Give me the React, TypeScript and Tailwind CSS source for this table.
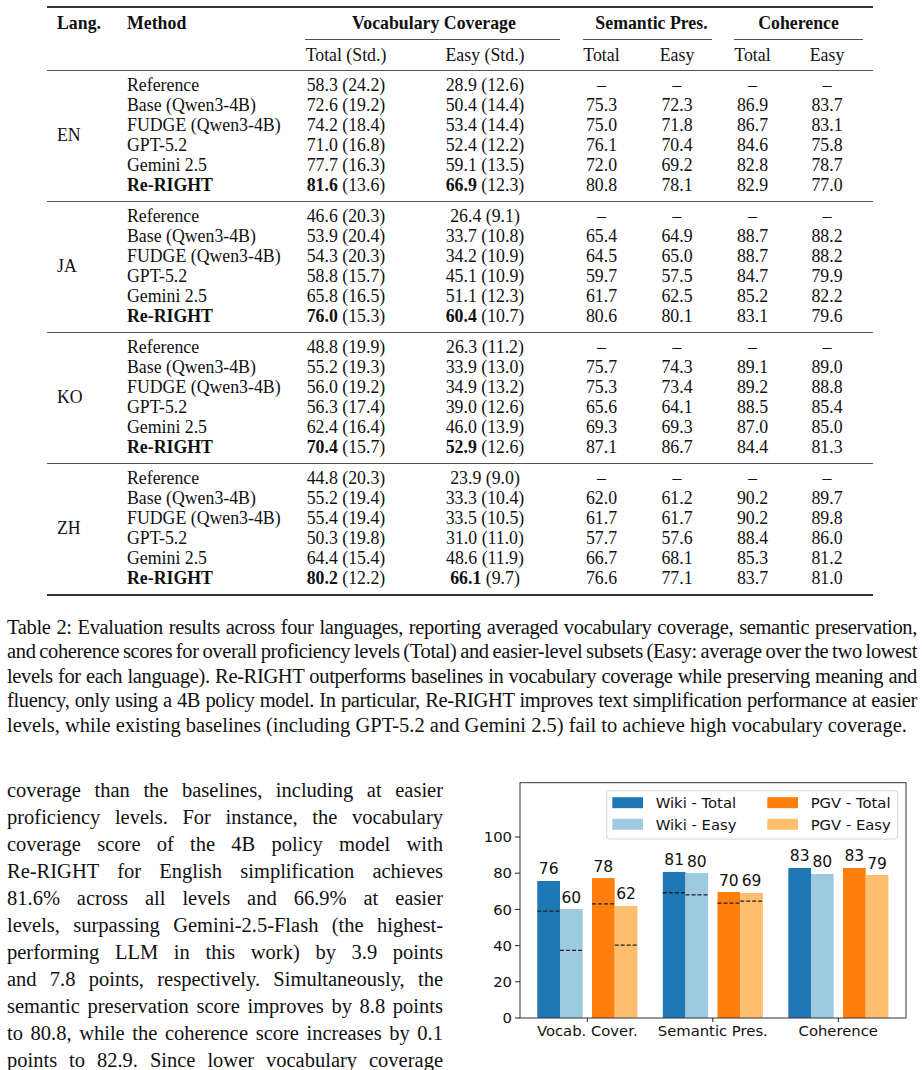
type Row = { method: string; total: [string, string]; easy: [string, string]; sem: [string, string]; coh: [string, string] };

const dash: [string, string] = ['–', '–'];

const groups: { lang: string; rows: Row[] }[] = [
  {
    lang: 'EN',
    rows: [
      { method: 'Reference', total: ['58.3', '(24.2)'], easy: ['28.9', '(12.6)'], sem: dash, coh: dash },
      { method: 'Base (Qwen3-4B)', total: ['72.6', '(19.2)'], easy: ['50.4', '(14.4)'], sem: ['75.3', '72.3'], coh: ['86.9', '83.7'] },
      { method: 'FUDGE (Qwen3-4B)', total: ['74.2', '(18.4)'], easy: ['53.4', '(14.4)'], sem: ['75.0', '71.8'], coh: ['86.7', '83.1'] },
      { method: 'GPT-5.2', total: ['71.0', '(16.8)'], easy: ['52.4', '(12.2)'], sem: ['76.1', '70.4'], coh: ['84.6', '75.8'] },
      { method: 'Gemini 2.5', total: ['77.7', '(16.3)'], easy: ['59.1', '(13.5)'], sem: ['72.0', '69.2'], coh: ['82.8', '78.7'] },
      { method: 'Re-RIGHT', total: ['81.6', '(13.6)'], easy: ['66.9', '(12.3)'], sem: ['80.8', '78.1'], coh: ['82.9', '77.0'] },
    ],
  },
  {
    lang: 'JA',
    rows: [
      { method: 'Reference', total: ['46.6', '(20.3)'], easy: ['26.4', '(9.1)'], sem: dash, coh: dash },
      { method: 'Base (Qwen3-4B)', total: ['53.9', '(20.4)'], easy: ['33.7', '(10.8)'], sem: ['65.4', '64.9'], coh: ['88.7', '88.2'] },
      { method: 'FUDGE (Qwen3-4B)', total: ['54.3', '(20.3)'], easy: ['34.2', '(10.9)'], sem: ['64.5', '65.0'], coh: ['88.7', '88.2'] },
      { method: 'GPT-5.2', total: ['58.8', '(15.7)'], easy: ['45.1', '(10.9)'], sem: ['59.7', '57.5'], coh: ['84.7', '79.9'] },
      { method: 'Gemini 2.5', total: ['65.8', '(16.5)'], easy: ['51.1', '(12.3)'], sem: ['61.7', '62.5'], coh: ['85.2', '82.2'] },
      { method: 'Re-RIGHT', total: ['76.0', '(15.3)'], easy: ['60.4', '(10.7)'], sem: ['80.6', '80.1'], coh: ['83.1', '79.6'] },
    ],
  },
  {
    lang: 'KO',
    rows: [
      { method: 'Reference', total: ['48.8', '(19.9)'], easy: ['26.3', '(11.2)'], sem: dash, coh: dash },
      { method: 'Base (Qwen3-4B)', total: ['55.2', '(19.3)'], easy: ['33.9', '(13.0)'], sem: ['75.7', '74.3'], coh: ['89.1', '89.0'] },
      { method: 'FUDGE (Qwen3-4B)', total: ['56.0', '(19.2)'], easy: ['34.9', '(13.2)'], sem: ['75.3', '73.4'], coh: ['89.2', '88.8'] },
      { method: 'GPT-5.2', total: ['56.3', '(17.4)'], easy: ['39.0', '(12.6)'], sem: ['65.6', '64.1'], coh: ['88.5', '85.4'] },
      { method: 'Gemini 2.5', total: ['62.4', '(16.4)'], easy: ['46.0', '(13.9)'], sem: ['69.3', '69.3'], coh: ['87.0', '85.0'] },
      { method: 'Re-RIGHT', total: ['70.4', '(15.7)'], easy: ['52.9', '(12.6)'], sem: ['87.1', '86.7'], coh: ['84.4', '81.3'] },
    ],
  },
  {
    lang: 'ZH',
    rows: [
      { method: 'Reference', total: ['44.8', '(20.3)'], easy: ['23.9', '(9.0)'], sem: dash, coh: dash },
      { method: 'Base (Qwen3-4B)', total: ['55.2', '(19.4)'], easy: ['33.3', '(10.4)'], sem: ['62.0', '61.2'], coh: ['90.2', '89.7'] },
      { method: 'FUDGE (Qwen3-4B)', total: ['55.4', '(19.4)'], easy: ['33.5', '(10.5)'], sem: ['61.7', '61.7'], coh: ['90.2', '89.8'] },
      { method: 'GPT-5.2', total: ['50.3', '(19.8)'], easy: ['31.0', '(11.0)'], sem: ['57.7', '57.6'], coh: ['88.4', '86.0'] },
      { method: 'Gemini 2.5', total: ['64.4', '(15.4)'], easy: ['48.6', '(11.9)'], sem: ['66.7', '68.1'], coh: ['85.3', '81.2'] },
      { method: 'Re-RIGHT', total: ['80.2', '(12.2)'], easy: ['66.1', '(9.7)'], sem: ['76.6', '77.1'], coh: ['83.7', '81.0'] },
    ],
  },
];

const caption = [
  'Table 2: Evaluation results across four languages, reporting averaged vocabulary coverage, semantic preservation,',
  'and coherence scores for overall proficiency levels (Total) and easier-level subsets (Easy: average over the two lowest',
  'levels for each language). Re-RIGHT outperforms baselines in vocabulary coverage while preserving meaning and',
  'fluency, only using a 4B policy model. In particular, Re-RIGHT improves text simplification performance at easier',
];

const body = [
  'coverage than the baselines, including at easier',
  'proficiency levels.  For instance, the vocabulary',
  'coverage score of the 4B policy model with',
  'Re-RIGHT for English simplification achieves',
  '81.6% across all levels and 66.9% at easier',
  'levels, surpassing Gemini-2.5-Flash (the highest-',
  'performing LLM in this work) by 3.9 points',
  'and 7.8 points, respectively.  Simultaneously, the',
  'semantic preservation score improves by 8.8 points',
  'to 80.8, while the coherence score increases by 0.1',
  'points to 82.9.  Since lower vocabulary coverage',
];

function TableRow({ row }: { row: Row }) {
  const best = row.method === 'Re-RIGHT';
  return (
    <div className="flex h-[20px] items-center leading-[20px]">
      <div className={`w-[178px] pl-[10px] ${best ? 'font-bold' : ''}`}>{row.method}</div>
      <div className="w-[102px] text-center">
        <span className={best ? 'font-bold' : ''}>{row.total[0]}</span> {row.total[1]}
      </div>
      <div className="w-[176px] text-center">
        <span className={best ? 'font-bold' : ''}>{row.easy[0]}</span> {row.easy[1]}
      </div>
      <div className="w-[57px] text-center">{row.sem[0]}</div>
      <div className="w-[94px] text-center">{row.sem[1]}</div>
      <div className="w-[57px] text-center">{row.coh[0]}</div>
      <div className="w-[92px] text-center">{row.coh[1]}</div>
    </div>
  );
}

function ResultsTable() {
  return (
    <div className="ml-[47px] w-[826px] pt-[6px] text-[17.8px] text-[#111]">
      <div className="h-[2px] bg-[#333]" />
      <div className="flex h-[31px] items-center font-bold">
        <div className="w-[70px] pl-[10px]">Lang.</div>
        <div className="w-[178px] pl-[10px]">Method</div>
        <div className="w-[278px] text-center">Vocabulary Coverage</div>
        <div className="w-[151px] pl-[6px] text-center">Semantic Pres.</div>
        <div className="w-[149px] text-center">Coherence</div>
      </div>
      <div className="flex h-px">
        <div className="w-[248px]" />
        <div className="w-[278px] pl-[10px] pr-[13px]"><div className="h-px bg-[#555]" /></div>
        <div className="w-[151px] pl-[10px] pr-[12px]"><div className="h-px bg-[#555]" /></div>
        <div className="w-[149px] px-[10px]"><div className="h-px bg-[#555]" /></div>
      </div>
      <div className="flex h-[30px] items-center">
        <div className="w-[248px]" />
        <div className="w-[102px] text-center">Total (Std.)</div>
        <div className="w-[176px] text-center">Easy (Std.)</div>
        <div className="w-[57px] text-center">Total</div>
        <div className="w-[94px] text-center">Easy</div>
        <div className="w-[57px] text-center">Total</div>
        <div className="w-[92px] text-center">Easy</div>
      </div>
      {groups.map((g, i) => (
        <div key={g.lang}>
          <div className="h-px bg-[#555]" />
          <div className="flex pt-[4px] pb-[6px]">
            <div className="flex w-[70px] items-center pl-[10px]">{g.lang}</div>
            <div className="flex flex-col">
              {g.rows.map(r => <TableRow key={r.method} row={r} />)}
            </div>
          </div>
          {i === groups.length - 1 && <div className="h-[2px] bg-[#333]" />}
        </div>
      ))}
    </div>
  );
}

const C = { wt: '#1f77b4', we: '#9ecae1', pt: '#ff7f0e', pe: '#fdbf6f' };

const chartGroups = [
  { name: 'Vocab. Cover.', bars: [75.7, 60.2, 77.3, 61.9], labels: ['76', '60', '78', '62'], ref: [59, 37.4, 63, 40.3] },
  { name: 'Semantic Pres.', bars: [80.7, 80.1, 69.6, 69.1], labels: ['81', '80', '70', '69'], ref: [69.2, 68, 63.5, 64.6] },
  { name: 'Coherence', bars: [82.9, 79.6, 82.9, 79.0], labels: ['83', '80', '83', '79'], ref: [] as number[] },
];

function Chart() {
  const y = (v: number) => 248 - v * 1.81;
  const offs = [0, 22.7, 54.7, 77.4];
  const cols = [C.wt, C.we, C.pt, C.pe];
  const bw = 22.7;
  const font = "'DejaVu Sans', sans-serif";
  return (
    <svg width="442" height="300" viewBox="0 0 442 300" fontFamily={font} fontSize="14.8">
      {[0, 20, 40, 60, 80, 100].map(t => (
        <g key={t}>
          <line x1="35" x2="40" y1={y(t)} y2={y(t)} stroke="#222" strokeWidth="1" />
          <text x="32" y={y(t) + 5.2} textAnchor="end" fill="#111">{t}</text>
        </g>
      ))}
      {chartGroups.map((g, gi) => {
        const x0 = 57.3 + gi * 125.5;
        return (
          <g key={g.name}>
            {g.bars.map((v, bi) => (
              <g key={bi}>
                <rect x={x0 + offs[bi]} y={y(v)} width={bw} height={248 - y(v)} fill={cols[bi]} />
                <text x={x0 + offs[bi] + bw / 2} y={y(v) - 6.5} textAnchor="middle" fill="#111" fontSize="15.5">{g.labels[bi]}</text>
              </g>
            ))}
            {g.ref.map((v, bi) => (
              <line key={'r' + bi} x1={x0 + offs[bi]} x2={x0 + offs[bi] + bw} y1={y(v)} y2={y(v)} stroke="#222" strokeWidth="1.3" strokeDasharray="4 2" />
            ))}
            <line x1={x0 + 50} x2={x0 + 50} y1="248" y2="252" stroke="#222" strokeWidth="1" />
            <text x={x0 + 50} y="265.5" textAnchor="middle" fill="#111">{g.name}</text>
          </g>
        );
      })}
      <rect x="40" y="12.7" width="386" height="235.3" fill="none" stroke="#333" strokeWidth="1" />
      <rect x="126.7" y="20.7" width="291" height="48.3" rx="3" fill="#fff" fillOpacity="0.85" stroke="#d4d4d4" strokeWidth="1" />
      {[
        { c: C.wt, t: 'Wiki - Total', x: 132.3, yc: 32.7 },
        { c: C.we, t: 'Wiki - Easy', x: 132.3, yc: 54.3 },
        { c: C.pt, t: 'PGV - Total', x: 287.3, yc: 32.7 },
        { c: C.pe, t: 'PGV - Easy', x: 287.3, yc: 54.3 },
      ].map(l => (
        <g key={l.t}>
          <rect x={l.x} y={l.yc - 5.5} width="30.7" height="11" fill={l.c} />
          <text x={l.x + 43.4} y={l.yc + 5.2} fill="#111">{l.t}</text>
        </g>
      ))}
    </svg>
  );
}

export default function App() {
  return (
    <div className="h-[1070px] w-[922px] overflow-hidden bg-white font-['Liberation_Serif',serif] text-black">
      <ResultsTable />

      <div className="mt-[19px] ml-[7px] w-[910px] text-[20.5px] leading-[24.4px] text-[#111]">
        {caption.map(l => (
          <div key={l} className="whitespace-nowrap text-justify tracking-[-0.35px] [word-spacing:-2px] [text-align-last:justify]">{l}</div>
        ))}
        <div className="whitespace-nowrap">
          levels, while existing baselines (including GPT-5.2 and Gemini 2.5) fail to achieve high vocabulary coverage.
        </div>
      </div>

      <div className="mt-[33px] flex">
        <div className="ml-[7px] w-[436px] pt-[6.5px] text-[20.5px] leading-[27px] text-[#111]">
          {body.map(l => (
            <div key={l} className="whitespace-nowrap text-justify [text-align-last:justify]">{l}</div>
          ))}
        </div>
        <div className="ml-[37px]">
          <Chart />
        </div>
      </div>
    </div>
  );
}
